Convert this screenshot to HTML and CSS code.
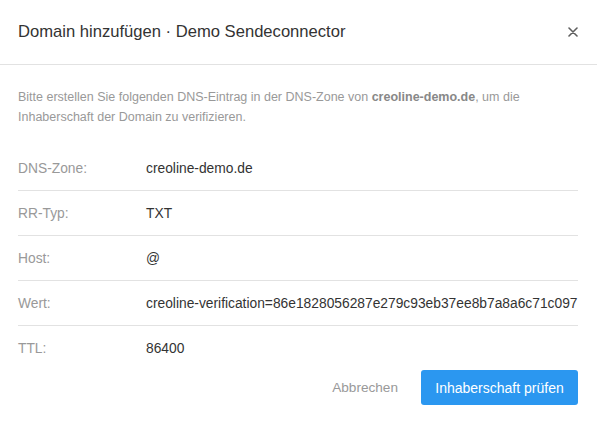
FILE: index.html
```html
<!DOCTYPE html>
<html lang="de">
<head>
  <meta charset="UTF-8">
  <meta name="viewport" content="width=device-width, initial-scale=1.0">
  <title>Domain hinzufügen</title>
  <link rel="stylesheet" href="styles.css">
</head>
<body>
  <div class="modal">
    <div class="modal-header">
      <h2>Domain hinzufügen · Demo Sendeconnector</h2>
      <button class="close" type="button" aria-label="Schließen">
        <svg width="10" height="10" viewBox="0 0 10 10"><path d="M1 1 L9 9 M9 1 L1 9" stroke="#5f5f5f" stroke-width="1.6" stroke-linecap="round"/></svg>
      </button>
    </div>
    <div class="modal-body">
      <p class="intro">Bitte erstellen Sie folgenden DNS-Eintrag in der DNS-Zone von <strong>creoline-demo.de</strong>, um die Inhaberschaft der Domain zu verifizieren.</p>
      <div class="record">
        <div class="row"><span class="label">DNS-Zone:</span><span class="value">creoline-demo.de</span></div>
        <div class="row"><span class="label">RR-Typ:</span><span class="value">TXT</span></div>
        <div class="row"><span class="label">Host:</span><span class="value">@</span></div>
        <div class="row"><span class="label">Wert:</span><span class="value">creoline-verification=86e1828056287e279c93eb37ee8b7a8a6c71c097</span></div>
        <div class="row"><span class="label">TTL:</span><span class="value">86400</span></div>
      </div>
    </div>
    <div class="modal-footer">
      <button class="btn-link" type="button">Abbrechen</button>
      <button class="btn-primary" type="button">Inhaberschaft prüfen</button>
    </div>
  </div>
</body>
</html>
```

FILE: styles.css
```css
body {
    margin: 0;
    font-family: "Liberation Sans", Arial, sans-serif;
    background: #fff;
    color: #333;
}
.modal {
    width: 597px;
    background: #fff;
}
.modal-header {
    display: flex;
    align-items: center;
    justify-content: space-between;
    height: 64px;
    padding: 0 19px 0 18px;
    border-bottom: 1px solid #e2e2e2;
}
.modal-header h2 {
    margin: 0;
    font-size: 16.6px;
    font-weight: normal;
    color: #333;
}
.close {
    display: flex;
    padding: 0;
    border: none;
    background: none;
    cursor: pointer;
}
.modal-body {
    padding: 22px 19px 0 18px;
}
.intro {
    margin: 0 0 19px;
    font-size: 12.5px;
    line-height: 20px;
    color: #999;
}
.intro strong {
    color: #888;
}
.row {
    display: flex;
    align-items: center;
    height: 44px;
    border-bottom: 1px solid #e2e2e2;
    font-size: 13.8px;
}
.row:last-child {
    border-bottom: none;
}
.label {
    width: 128px;
    flex-shrink: 0;
    color: #999;
}
.value {
    color: #333;
    white-space: nowrap;
}
.modal-footer {
    display: flex;
    justify-content: flex-end;
    align-items: center;
    gap: 23px;
    padding: 0 19px 19px;
}
.btn-link {
    border: none;
    background: none;
    font-family: inherit;
    font-size: 13.6px;
    color: #999;
    cursor: pointer;
    padding: 0;
}
.btn-primary {
    height: 35px;
    width: 157px;
    border: none;
    border-radius: 3px;
    background: #2b97f0;
    color: #fff;
    font-family: inherit;
    font-size: 14px;
    cursor: pointer;
}
```
